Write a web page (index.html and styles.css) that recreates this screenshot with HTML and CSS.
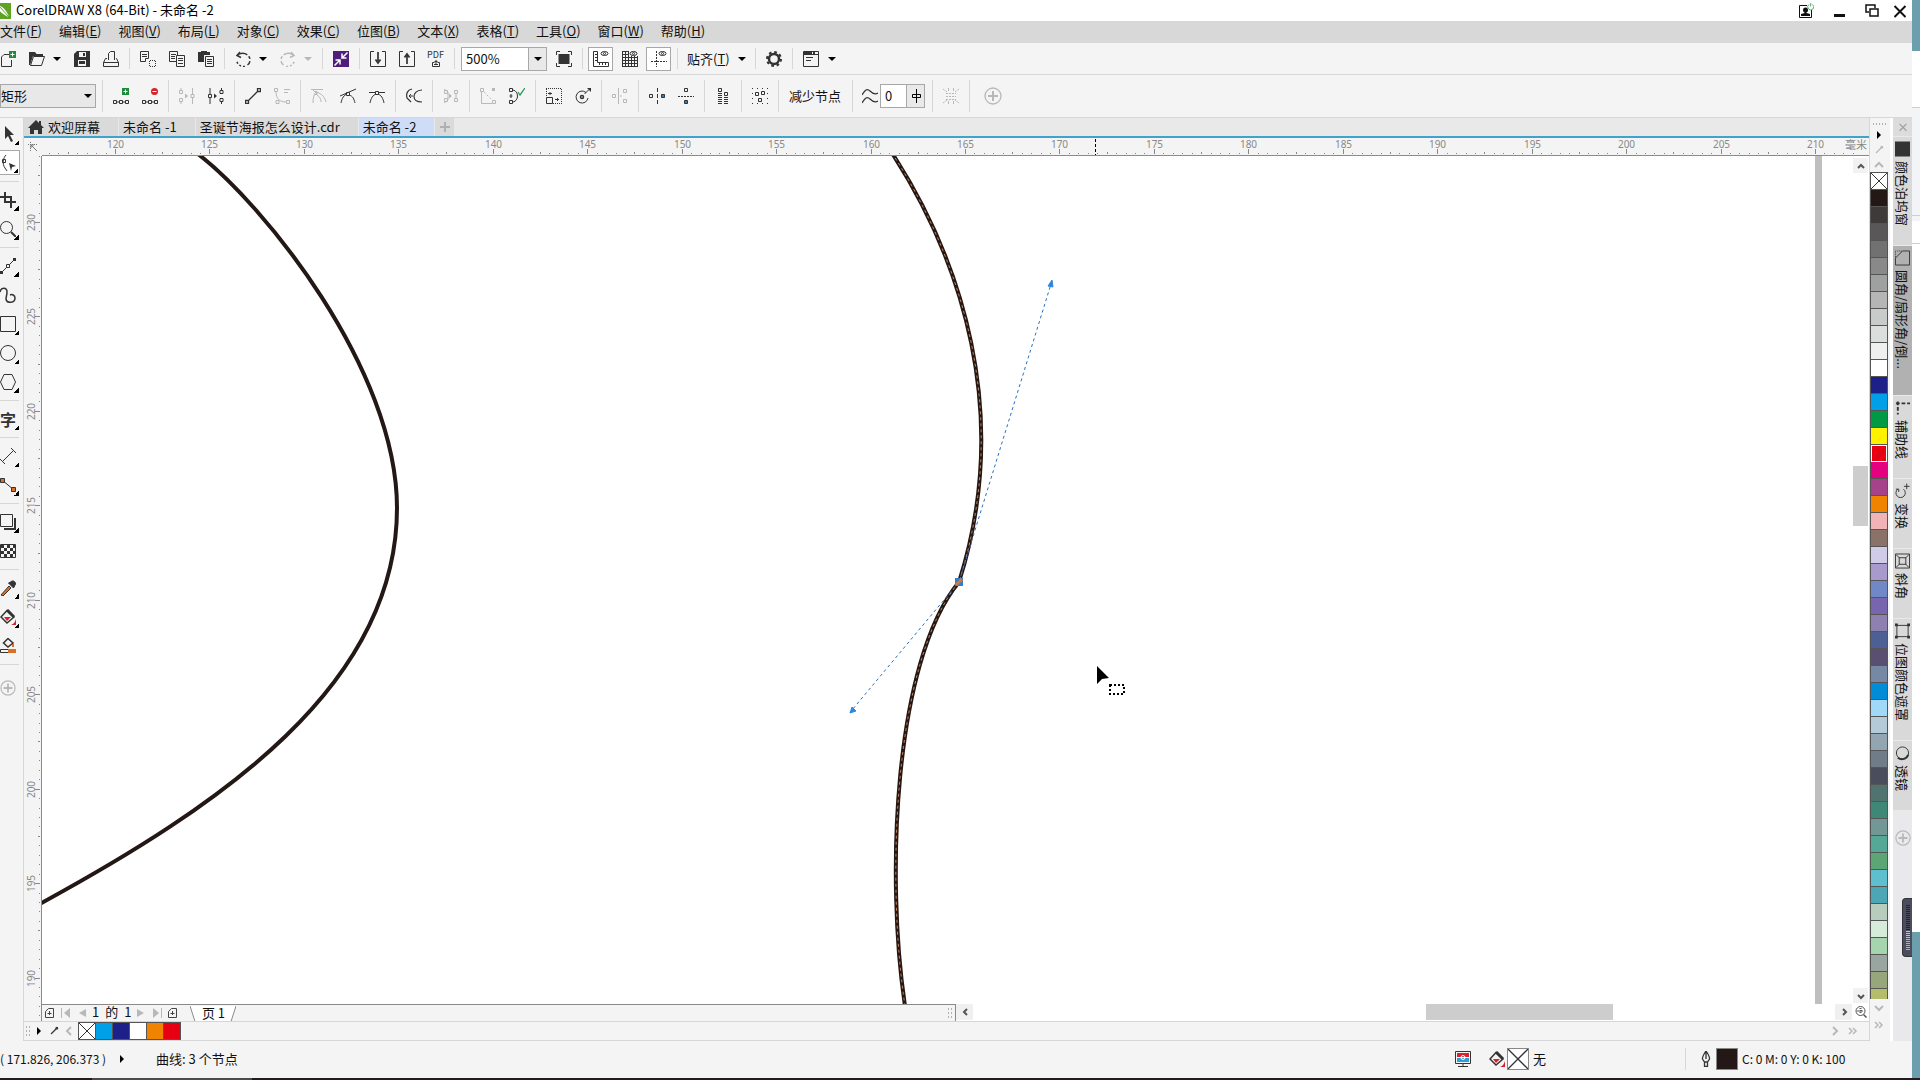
FILE: index.html
```html
<!DOCTYPE html>
<html lang="zh-CN">
<head>
<meta charset="utf-8">
<title>CorelDRAW X8 (64-Bit) - 未命名 -2</title>
<link rel="stylesheet" href="styles.css">
</head>
<body>
<svg class="sprite" aria-hidden="true">
  <symbol id="i-logo" viewBox="0 0 16 16"><path d="M0 0h16v16H0z" fill="#5da423" stroke="none"/><path d="M2 2c6 1 10 6 12 12-6-2-11-6-12-12z" fill="#fff" stroke="none"/><path d="M4 3l10 11" stroke="#5da423"/></symbol>
  <symbol id="i-user" viewBox="0 0 16 16"><path d="M9 2.500H1.500v12h12V7"/><circle cx="7.500" cy="7" r="2.500" fill="currentColor" stroke="none"/><path d="M6.500 8h2v2l3.500 1v2H3v-2l3.500-1z" fill="currentColor" stroke="none"/><path d="M11 1.500a3 3 0 1 0 3.500 0M12.700 0v3.500" stroke="#4caf6a"/></symbol>
  <symbol id="i-min" viewBox="0 0 16 16"><path d="M3 12.500h11" stroke-width="3"/></symbol>
  <symbol id="i-restore" viewBox="0 0 16 16"><path d="M5 9H2V2h9v3M6 6h8v7H6z" stroke-width="1.500"/></symbol>
  <symbol id="i-close" viewBox="0 0 16 16"><path d="M2.500 3l11 11M13.500 3l-11 11" stroke-width="2"/></symbol>
  <symbol id="i-down" viewBox="0 0 8 4"><path d="M0 0h8L4 4z" fill="currentColor" stroke="none"/></symbol>
  <symbol id="i-play" viewBox="0 0 8 8"><path d="M2 0l4 4-4 4z" fill="currentColor" stroke="none"/></symbol>

  <symbol id="i-new" viewBox="0 0 16 16"><path d="M9 3.500H4L1.500 6v9.500h10V9"/><path d="M9 0h7v7H9z" fill="#1d8a3e" stroke="none"/><path d="M12.500 1.500v4M10.500 3.500h4" stroke="#fff"/></symbol>
  <symbol id="i-open" viewBox="0 0 16 16"><path d="M0 1h6l1.500 2H14v2H4L1 14H0z" fill="currentColor" stroke="none"/><path d="M4.500 5.500h11l-3 9h-11z"/></symbol>
  <symbol id="i-save" viewBox="0 0 16 16"><path d="M3 0h13v16H0V3z" fill="currentColor" stroke="none"/><path d="M5 1h7v5H5zM4 9h8v6H4z" fill="#f4f4f4" stroke="none"/><path d="M5 10h6v3H5zM9 2h2v3H9z" fill="currentColor" stroke="none"/></symbol>
  <symbol id="i-print" viewBox="0 0 16 16"><path d="M5.500 9V2.500L7.500.5h4V9M4 7.500H2.500l-2 4v4h15v-4l-2-4H13M.5 11.500h15"/></symbol>
  <symbol id="i-cut" viewBox="0 0 16 16"><path d="M.5.500h8v7h-3v3h-5zM2 3.500h5M2 5.500h5"/><path d="M10 9.500h6M10 15.500h6M9.500 10v6M15.500 10v6" stroke-dasharray="1 1"/></symbol>
  <symbol id="i-copy" viewBox="0 0 16 16"><path d="M7 10.500H.5V.500h8V4M2 3.500h5M2 5.500h4M2 7.500h4M7.500 4.500h8v11h-8zM9 7.500h5M9 9.500h5M9 12.500h5"/></symbol>
  <symbol id="i-paste" viewBox="0 0 16 16"><path d="M0 1h3V0h6v1h3v3H6v7H0z" fill="currentColor" stroke="none"/><path d="M7.500 5.500h8v10h-8zM9 8.500h5M9 10.500h5M9 12.500h5"/></symbol>
  <symbol id="i-undo" viewBox="0 0 16 16"><path d="M2 4.500C7 0 15 3 15 9c0 2-1 4-2.500 5" stroke-width="1.500" stroke-dasharray="11 2 3 2"/><path d="M5 1L2 4.500l4 2" stroke-width="1.500"/><path d="M10 15.500C6 16 2 13.500 1.500 9" stroke-width="1.500" stroke-dasharray="2 2"/></symbol>
  <symbol id="i-redo" viewBox="0 0 16 16"><path d="M14 4.500C9 0 1 3 1 9c0 2 1 4 2.500 5" stroke-width="1.500" stroke-dasharray="11 2 3 2"/><path d="M11 1l3 3.500-4 2" stroke-width="1.500"/><path d="M6 15.500c4 .5 8-2 8.500-6.500" stroke-width="1.500" stroke-dasharray="2 2"/></symbol>
  <symbol id="i-search" viewBox="0 0 16 16"><path d="M0 0h16v16H0z" fill="#4f1d7a" stroke="none"/><path d="M14.500 1.500l-5 5M9 2.500V7h4.500M1.500 14.500l5-5M2.500 9H7v4.500" stroke="#fff" stroke-width="1.500"/></symbol>
  <symbol id="i-import" viewBox="0 0 16 16"><path d="M4 .5H.5v15h15V.5H12"/><path d="M8 1v9M5.500 8.500L8 12l2.500-3.500" stroke-width="1.700"/></symbol>
  <symbol id="i-export" viewBox="0 0 16 16"><path d="M4 .5H.5v15h15V.5H12"/><path d="M8 13V4M5.500 6.500L8 3l2.500 3.500" stroke-width="1.700"/></symbol>
  <symbol id="i-pdfbox" viewBox="0 0 8 8"><path d="M2.500 3.500H.5v4h7v-4h-2M4 1v5M2.500 2.500h3M2 5.500h4"/></symbol>
  <symbol id="i-full" viewBox="0 0 16 16"><path d="M2.500 3h11v10h-11z" fill="currentColor" stroke="none"/><path d="M.5 4V.5H4M12 .5h3.500V4M15.500 12v3.500H12M4 15.500H.5V12"/></symbol>
  <symbol id="i-rulers" viewBox="0 0 16 16"><path d="M.5.500h4v11h11v4H.5zM2 3.500h3M2 6.500h3M2 9.500h3M6.500 14v-2M9.500 14v-2M12.500 14v-2"/><ellipse cx="11.500" cy="2.500" rx="3.500" ry="2"/><circle cx="11.500" cy="2.500" r="1"/></symbol>
  <symbol id="i-grid" viewBox="0 0 16 16"><path d="M.5 0v16M3.500 0v16M6.500 0v16M9.500 5v11M12.500 5v11M15.500 5v11M0 .5h7M0 3.500h7M0 6.500h16M0 9.500h16M0 12.500h16M0 15.500h16"/><ellipse cx="11.500" cy="2.500" rx="3.500" ry="2"/><circle cx="11.500" cy="2.500" r="1"/></symbol>
  <symbol id="i-guides" viewBox="0 0 16 16"><path d="M5.500 0v16M0 10.500h16" stroke-dasharray="2 1"/><ellipse cx="11.500" cy="2.500" rx="3.500" ry="2"/><circle cx="11.500" cy="2.500" r="1"/></symbol>
  <symbol id="i-gear" viewBox="0 0 16 16"><circle cx="8" cy="8" r="5" stroke-width="2.500"/><circle cx="8" cy="8" r="7" stroke-width="2" stroke-dasharray="2.750 2.750"/></symbol>
  <symbol id="i-app" viewBox="0 0 16 16"><path d="M.5.500h15v15H.5zM0 3.500h16M3 6.500h7M3 9.500h5"/><path d="M1 1h8v2H1zM10 1h2v2h-2z" fill="currentColor" stroke="none"/></symbol>

  <symbol id="i-addnode" viewBox="0 0 18 16"><path d="M1.500 12.500h3v3h-3zM7.500 12.500h3v3h-3zM13.500 12.500h3v3h-3zM5 14h2M11 14h2"/><path d="M10 0h7v7h-7z" fill="#1d8a3e" stroke="none"/><path d="M13.500 1.500v4M11.500 3.500h4" stroke="#fff"/></symbol>
  <symbol id="i-delnode" viewBox="0 0 18 16"><path d="M1.500 12.500h3v3h-3zM7.500 12.500h3v3h-3zM13.500 12.500h3v3h-3zM5 14h2M11 14h2"/><circle cx="13.500" cy="3.500" r="3.500" fill="#d8232a" stroke="none"/><path d="M11.500 3.500h4" stroke="#fff"/></symbol>
  <symbol id="i-join" viewBox="0 0 16 16"><path d="M2 0v2M2 13v3M13.500 0v6M13.500 10v6M.5 2.500h3v3h-3zM.5 10.500h3v3h-3zM12 6.500h3v3h-3z"/><path d="M6 5.500L9 8l-3 2.500z" fill="currentColor" stroke="none"/></symbol>
  <symbol id="i-break" viewBox="0 0 16 16"><path d="M2 0v6M2 10v6M13.500 0v2M13.500 13v3M.5 6.500h3v3h-3zM12 2.500h3v3h-3zM12 10.500h3v3h-3z"/><path d="M6 5.500L9 8l-3 2.500z" fill="currentColor" stroke="none"/></symbol>
  <symbol id="i-line" viewBox="0 0 16 16"><path d="M.5 12.500h3v3h-3zM12.500.500h3v3h-3zM3.500 12.500l9-9" stroke-width="1.300"/></symbol>
  <symbol id="i-curve" viewBox="0 0 16 16"><path d="M.5.500h3v3h-3zM12.500 12.500h3v3h-3zM2 4c0 7 4 10 10 10M10 1.500h6M10 4.500h4M2 12.500h3v3H2z"/></symbol>
  <symbol id="i-cusp" viewBox="0 0 16 16"><path d="M0 1.500h12M1 1l5 5M2 15c0-5 1-9 3-11l3 1c4 2 6 5 7 9M3 3.500h3v3H3M6 7c3 2 4 4 4 7"/></symbol>
  <symbol id="i-smooth" viewBox="0 0 16 16"><path d="M0 8l16-7M6.500 4.500h3v3h-3zM1 15c1-5 3-8 6-9M9 7c4 1 5 4 6 8"/></symbol>
  <symbol id="i-sym" viewBox="0 0 16 16"><path d="M0 4.500h6M10 4.500h6M6.500 3.500h3v3h-3zM1 15c1-5 3-8 6-9M9 6c3 1 5 4 6 9"/></symbol>
  <symbol id="i-rev" viewBox="0 0 16 16"><path d="M6 1C1 2 0 6 1 10l4 4M16 2c-6 0-8 4-8 6.500S10 14 16 14" stroke-width="1.200"/><path d="M3 8h4M5 6L3 8l2 2"/></symbol>
  <symbol id="i-sub" viewBox="0 0 16 16"><path d="M1 1l4 3v8l-4 3M1.500 2.500h3v3h-3zM1.500 10.500h3v3h-3zM11.500 2.500h3v3h-3zM11.500 10.500h3v3h-3zM13 6v4"/><path d="M6 5.500L9 8l-3 2.500z" fill="currentColor" stroke="none"/></symbol>
  <symbol id="i-extend" viewBox="0 0 16 16"><path d="M.5.500h3v3h-3zM12.500 12.500h3v3h-3zM1.500 4v11.500H12"/><path d="M4 4l8 8" stroke-dasharray="2 2"/><path d="M12 0h3v3h-3z" fill="currentColor" stroke="none"/></symbol>
  <symbol id="i-closecurve" viewBox="0 0 16 16"><path d="M.5.500h3v3h-3zM.5 12.500h3v3h-3zM4 2c6 1 6 11 0 12M2 6v4M.5 8h3"/><path d="M9 4l2 3 5-7" stroke="#2d9a56" stroke-width="1.300"/></symbol>
  <symbol id="i-stretch" viewBox="0 0 16 16"><path d="M0 .5h16M15.500 1v15M.5 1v8M7 15.500h9" stroke-dasharray="1 1"/><path d="M.5 9.500h6v6h-6zM9 11.500h4M11.500 10v3M2 5.500h4M4 4v3"/></symbol>
  <symbol id="i-rotate" viewBox="0 0 16 16"><path d="M11 4.500A6 6 0 1 0 13 10M9.500 6L14 1.500"/><path d="M12 0h4v4z" fill="currentColor" stroke="none"/><circle cx="7" cy="9" r="1.500" stroke-width="1.500"/></symbol>
  <symbol id="i-align" viewBox="0 0 16 16"><path d="M6.500 0v16M.5 6.500h3v3h-3zM11.500 1.500h3v3h-3zM11.500 11.500h3v3h-3zM10 8H8"/></symbol>
  <symbol id="i-hrefl" viewBox="0 0 16 16"><path d="M8.500 0v4M8.500 6v4M8.500 12v4M.5 6.500h3v3h-3z"/><path d="M12.500 6.500h3v3h-3z" fill="#2f7fc1"/></symbol>
  <symbol id="i-vrefl" viewBox="0 0 16 16"><path d="M0 8.500h16" stroke-dasharray="2 1"/><path d="M6.500.500h3v3h-3z"/><path d="M6.500 12.500h3v3h-3z" fill="#2f7fc1"/></symbol>
  <symbol id="i-elastic" viewBox="0 0 16 16"><path d="M3.500.500h3v3h-3zM9.500 4.500h3v3h-3z"/><path d="M3 5.500h4M3 7.500h4M3 9.500h4M3 11.500h4M3 13.500h4M3 15.500h4M9 9.500h4M9 11.500h4M9 13.500h4M9 15.500h4"/></symbol>
  <symbol id="i-selall" viewBox="0 0 16 16"><path d="M3.500 4.500h3v3h-3zM9.500 3.500h3v3h-3zM6.500 10.500h3v3h-3z"/><path d="M0 .5h16M0 15.500h16" stroke-dasharray="1 4"/><path d="M.5 5v6M15.500 5v6" stroke-dasharray="1 4"/></symbol>
  <symbol id="i-wave" viewBox="0 0 16 16"><path d="M0 7c3-5 5-7 8-4s5 4 8 2M0 15c3-5 5-7 8-4s5 4 8 2" stroke-width="1.200"/></symbol>
  <symbol id="i-slider" viewBox="0 0 12 14"><path d="M6.500 0v14M2.500 5.500h8v3h-8z"/></symbol>
  <symbol id="i-box" viewBox="0 0 16 16"><path d="M0 1l4 3M16 1l-4 3M0 15l4-3M16 15l-4-3M3 5.500h10M3 8.500h10M3 11.500h10" stroke-dasharray="2 1"/><path d="M5.500 0v3M10.500 0v3M5.500 13v3M10.500 13v3"/></symbol>
  <symbol id="i-plus" viewBox="0 0 18 18"><circle cx="9" cy="9" r="8" stroke-width="1.300"/><path d="M9 4v10M4 9h10" stroke-width="2"/></symbol>
  <symbol id="i-add" viewBox="0 0 16 16"><path d="M8 3v10M3 8h10" stroke-width="2"/></symbol>

  <symbol id="i-pick" viewBox="0 0 16 16"><path d="M5 0v13l3-3 3 6 2-1-3-6h4z" fill="currentColor" stroke="none"/></symbol>
  <symbol id="i-shape" viewBox="0 0 16 16"><path d="M6 0c-3 3-4 9-1 13l2 3M2.500 4.500h3v3h-3z"/><path d="M9 8l7 3-4 1-1 4z" fill="currentColor" stroke="none"/></symbol>
  <symbol id="i-crop" viewBox="0 0 16 16"><path d="M5 0v10h11M0 5h11v11" stroke-width="2"/></symbol>
  <symbol id="i-zoom" viewBox="0 0 16 16"><circle cx="6.500" cy="6.500" r="6"/><path d="M11 11l5 5" stroke-width="2"/></symbol>
  <symbol id="i-free" viewBox="0 0 16 16"><path d="M0 16L15 1"/><path d="M6.500 6.500h3v3h-3z" fill="#f4f4f4"/><path d="M0 13h3v3H0zM13 0h3v3h-3z" fill="currentColor" stroke="none"/></symbol>
  <symbol id="i-art" viewBox="0 0 16 16"><path d="M0 5c1-5 7-5 7 0 0 3-1 5-1 7 1 5 9 4 9-1 0-3-3-4-5-3" stroke-width="1.500"/></symbol>
  <symbol id="i-rect" viewBox="0 0 16 16"><path d="M.5.500h15v15H.5z"/></symbol>
  <symbol id="i-ell" viewBox="0 0 16 16"><circle cx="8" cy="8" r="7.500"/></symbol>
  <symbol id="i-poly" viewBox="0 0 16 16"><path d="M4 .5h8L15.500 8 12 15.500H4L.5 8z"/></symbol>
  <symbol id="i-dim" viewBox="0 0 16 16"><path d="M2 14L14 2M0 11l5 5M11 0l5 5"/></symbol>
  <symbol id="i-conn" viewBox="0 0 16 16"><path d="M2 3l12 10"/><path d="M.5 1.500h4v4h-4zM11.500 10.500h4v4h-4z" fill="#d8702a"/></symbol>
  <symbol id="i-shadow" viewBox="0 0 16 16"><path d="M.5.500h12v12H.5z"/><path d="M15 4v11H4" stroke-width="2"/></symbol>
  <symbol id="i-trans" viewBox="0 0 16 16"><path d="M.5 1.500h15v13H.5z"/><path d="M1 3.500h14M1 9.500h14" stroke-width="3" stroke-dasharray="3 3"/><path d="M4 6.500h11M4 12.500h11" stroke-width="3" stroke-dasharray="3 3"/></symbol>
  <symbol id="i-drop" viewBox="0 0 16 16"><path d="M1 15L9 6l2 2-8 8z" fill="#d8702a"/><path d="M8.500 3l5 5 2-4c0-3-3-4-5-2z" fill="currentColor"/></symbol>
  <symbol id="i-fill" viewBox="0 0 16 16"><path d="M7 1.500L1 8l6 6 7-6z" stroke-width="1.500"/><path d="M4 8h7l-4 4z" fill="#d8232a" stroke="none"/><path d="M7 1l7 7" stroke-width="3"/><path d="M16 10v6h-5c3-1 4-3 5-6z" fill="#d8232a" stroke="none"/></symbol>
  <symbol id="i-smart" viewBox="0 0 16 16"><path d="M8 .5L3.500 5 8 9l5-4z" stroke-width="1.500"/><path d="M.5 11.500h15v3H.5z"/><path d="M8 11h8v4H8zM12 6h2v3h-2z" fill="#d8702a" stroke="none"/></symbol>

  <symbol id="i-home" viewBox="0 0 16 16"><path d="M8 1L0 9h2v6h4v-4h4v4h4V9h2l-3-3V2h-2v2z" fill="currentColor" stroke="none"/></symbol>
  <symbol id="i-origin" viewBox="0 0 12 12"><path d="M1 3.500h10M3.500 1v10" stroke-dasharray="1 1"/><path d="M4 4l6 6M4 7V4h3"/></symbol>
  <symbol id="i-up" viewBox="0 0 12 12"><path d="M3 8l3-3 3 3" stroke-width="2"/></symbol>
  <symbol id="i-dn" viewBox="0 0 12 12"><path d="M3 5l3 3 3-3" stroke-width="2"/></symbol>
  <symbol id="i-up2" viewBox="0 0 12 12"><path d="M2 8l4-4 4 4" stroke-width="2"/></symbol>
  <symbol id="i-dn2" viewBox="0 0 12 12"><path d="M2 4l4 4 4-4" stroke-width="2"/></symbol>
  <symbol id="i-lt" viewBox="0 0 12 12"><path d="M8 3L5 6l3 3" stroke-width="2"/></symbol>
  <symbol id="i-rt" viewBox="0 0 12 12"><path d="M5 3l3 3-3 3" stroke-width="2"/></symbol>
  <symbol id="i-lt2" viewBox="0 0 12 12"><path d="M8 2L4 6l4 4" stroke-width="2"/></symbol>
  <symbol id="i-rt3" viewBox="0 0 12 12"><path d="M4 2l4 4-4 4" stroke-width="2"/></symbol>
  <symbol id="i-rt2" viewBox="0 0 12 12"><path d="M2 3l3 3-3 3M6 3l3 3-3 3" stroke-width="1.500"/></symbol>
  <symbol id="i-zoomall" viewBox="0 0 12 12"><circle cx="5.500" cy="5" r="4.500"/><path d="M8.500 8.500l3 3" stroke-width="1.500"/><path d="M5.500 2v6M2.500 5h6" stroke-dasharray="1 1" stroke-width="2"/></symbol>
  <symbol id="i-pen" viewBox="0 0 12 12"><path d="M3 9l5-5" stroke-width="1.300"/><path d="M7.500 3l1.500 1.500L10 3 9 2z" fill="currentColor"/></symbol>
  <symbol id="i-page" viewBox="0 0 10 10"><path d="M3.500.500h5v9h-8v-6zM4.500 3v4M2.500 5.500h4"/></symbol>
  <symbol id="i-first" viewBox="0 0 10 10"><path d="M.5 0v10" /><path d="M9 0v10L3 5z" fill="currentColor" stroke="none"/></symbol>
  <symbol id="i-prev" viewBox="0 0 10 10"><path d="M9 1v8L2 5z" fill="currentColor" stroke="none"/></symbol>
  <symbol id="i-next" viewBox="0 0 10 10"><path d="M1 1v8l7-4z" fill="currentColor" stroke="none"/></symbol>
  <symbol id="i-last" viewBox="0 0 10 10"><path d="M9.500 0v10" /><path d="M1 0v10l6-5z" fill="currentColor" stroke="none"/></symbol>
  <symbol id="i-pagetab" viewBox="0 0 46 16" preserveAspectRatio="none"><path d="M0 0l5 15.500h36L46 0" fill="#fff" stroke="#8a8a8a"/></symbol>

  <symbol id="i-d1" viewBox="0 0 16 16"><path d="M0 0h16v16H0z" fill="#333" stroke="none"/></symbol>
  <symbol id="i-d2" viewBox="0 0 16 16"><path d="M8 .5h7.500v15H.5V8z"/><path d="M.5 7V.5H8" stroke-dasharray="1 1"/></symbol>
  <symbol id="i-d3" viewBox="0 0 16 16"><path d="M1 3h15M3 1v14" stroke-width="2" stroke-dasharray="4 2"/></symbol>
  <symbol id="i-d4" viewBox="0 0 16 16"><path d="M3 6a5 5 0 1 0 6 0M1 6h3v3M12.500 0v6M9.500 3h6"/></symbol>
  <symbol id="i-d5" viewBox="0 0 16 16"><path d="M.5.500h15v15H.5zM4.500 4.500h7v7h-7zM1 1l4 4M15 1l-4 4M1 15l4-4M15 15l-4-4"/></symbol>
  <symbol id="i-d6" viewBox="0 0 16 16"><path d="M2 2h12v12H2z"/><path d="M0 0h3v3H0zM13 0h3v3h-3zM0 13h3v3H0zM13 13h3v3h-3z" fill="currentColor" stroke="none"/></symbol>
  <symbol id="i-d7" viewBox="0 0 16 16"><circle cx="8" cy="8" r="6.500"/><path d="M3 13a7 7 0 0 0 11-3" stroke-width="2"/></symbol>
  <symbol id="i-monitor" viewBox="0 0 16 16"><path d="M.5.500h15v12H.5zM3 15.500h10M8 13v2"/><path d="M2 2h12v4H2z" fill="#d8232a" stroke="none"/><path d="M2 7h12v4H2z" fill="#2a9fd8" stroke="none"/><circle cx="8" cy="6.500" r="2" stroke="#fff"/></symbol>
  <symbol id="i-nib" viewBox="0 0 16 16"><path d="M8 0C6 3 4 6 4.500 8l2 3h3l2-3C12 6 10 3 8 0zM8 2v6M6.500 11.500v4h3v-4" stroke-width="1.300"/></symbol>
  <symbol id="i-none" viewBox="0 0 16 16" preserveAspectRatio="none"><path d="M0 0l16 16M16 0L0 16"/></symbol>
</svg>

<div class="screen">
<div class="app">
  <header class="titlebar">
    <svg class="ic logo"><use href="#i-logo"/></svg>
    <h1>CorelDRAW X8 (64-Bit) - 未命名 -2</h1>
    <button aria-label="登录"><svg class="ic"><use href="#i-user"/></svg></button>
    <button aria-label="最小化"><svg class="ic"><use href="#i-min"/></svg></button>
    <button aria-label="还原"><svg class="ic"><use href="#i-restore"/></svg></button>
    <button class="close" aria-label="关闭"><svg class="ic"><use href="#i-close"/></svg></button>
  </header>

  <nav class="menubar">
    <button>文件(<u>F</u>)</button><button>编辑(<u>E</u>)</button><button>视图(<u>V</u>)</button><button>布局(<u>L</u>)</button><button>对象(<u>C</u>)</button><button>效果(<u>C</u>)</button><button>位图(<u>B</u>)</button><button>文本(<u>X</u>)</button><button>表格(<u>T</u>)</button><button>工具(<u>O</u>)</button><button>窗口(<u>W</u>)</button><button>帮助(<u>H</u>)</button>
  </nav>

  <div class="bar standard">
    <button class="tb" aria-label="新建"><svg class="ic"><use href="#i-new"/></svg></button>
    <button class="tb" aria-label="打开"><svg class="ic"><use href="#i-open"/></svg></button>
    <button class="dd" aria-label="最近打开"><svg class="arrow"><use href="#i-down"/></svg></button>
    <button class="tb" aria-label="保存"><svg class="ic"><use href="#i-save"/></svg></button>
    <button class="tb" aria-label="打印"><svg class="ic"><use href="#i-print"/></svg></button>
    <i class="sep"></i>
    <button class="tb" aria-label="剪切"><svg class="ic"><use href="#i-cut"/></svg></button>
    <button class="tb" aria-label="复制"><svg class="ic"><use href="#i-copy"/></svg></button>
    <button class="tb" aria-label="粘贴"><svg class="ic"><use href="#i-paste"/></svg></button>
    <i class="sep"></i>
    <button class="tb" aria-label="撤消"><svg class="ic"><use href="#i-undo"/></svg></button>
    <button class="dd" aria-label="撤消列表"><svg class="arrow"><use href="#i-down"/></svg></button>
    <button class="tb off" aria-label="重做"><svg class="ic"><use href="#i-redo"/></svg></button>
    <button class="dd off" aria-label="重做列表"><svg class="arrow"><use href="#i-down"/></svg></button>
    <i class="sep"></i>
    <button class="tb" aria-label="搜索内容"><svg class="ic"><use href="#i-search"/></svg></button>
    <i class="sep"></i>
    <button class="tb" aria-label="导入"><svg class="ic"><use href="#i-import"/></svg></button>
    <button class="tb" aria-label="导出"><svg class="ic"><use href="#i-export"/></svg></button>
    <button class="tb pdf"><span>PDF</span><svg><use href="#i-pdfbox"/></svg></button>
    <i class="sep"></i>
    <div class="combo zoomlevel"><input aria-label="缩放级别" value="500%"><button aria-label="缩放列表"><svg class="arrow"><use href="#i-down"/></svg></button></div>
    <button class="tb" aria-label="全屏预览"><svg class="ic"><use href="#i-full"/></svg></button>
    <i class="sep"></i>
    <button class="tb on" aria-label="显示标尺"><svg class="ic"><use href="#i-rulers"/></svg></button>
    <button class="tb" aria-label="显示网格"><svg class="ic"><use href="#i-grid"/></svg></button>
    <button class="tb on" aria-label="显示辅助线"><svg class="ic"><use href="#i-guides"/></svg></button>
    <i class="sep"></i>
    <button class="word">贴齐(<u>T</u>)</button>
    <button class="dd" aria-label="贴齐列表"><svg class="arrow"><use href="#i-down"/></svg></button>
    <i class="sep"></i>
    <button class="tb" aria-label="选项"><svg class="ic"><use href="#i-gear"/></svg></button>
    <i class="sep"></i>
    <button class="tb" aria-label="应用程序启动器"><svg class="ic"><use href="#i-app"/></svg></button>
    <button class="dd" aria-label="启动器列表"><svg class="arrow"><use href="#i-down"/></svg></button>
  </div>

  <div class="bar property">
    <div class="combo mode"><select aria-label="选取模式"><option>矩形</option><option>手绘</option></select><svg class="arrow"><use href="#i-down"/></svg></div>
    <i class="sep"></i>
    <button class="tb" aria-label="添加节点"><svg class="ic wide"><use href="#i-addnode"/></svg></button>
    <button class="tb" aria-label="删除节点"><svg class="ic wide"><use href="#i-delnode"/></svg></button>
    <i class="sep"></i>
    <button class="tb off" aria-label="连接两个节点"><svg class="ic"><use href="#i-join"/></svg></button>
    <button class="tb" aria-label="断开曲线"><svg class="ic"><use href="#i-break"/></svg></button>
    <i class="sep"></i>
    <button class="tb" aria-label="转换为线条"><svg class="ic"><use href="#i-line"/></svg></button>
    <button class="tb off" aria-label="转换为曲线"><svg class="ic"><use href="#i-curve"/></svg></button>
    <i class="sep"></i>
    <button class="tb off" aria-label="尖突节点"><svg class="ic"><use href="#i-cusp"/></svg></button>
    <button class="tb" aria-label="平滑节点"><svg class="ic"><use href="#i-smooth"/></svg></button>
    <button class="tb" aria-label="对称节点"><svg class="ic"><use href="#i-sym"/></svg></button>
    <i class="sep"></i>
    <button class="tb" aria-label="反转方向"><svg class="ic"><use href="#i-rev"/></svg></button>
    <i class="sep"></i>
    <button class="tb off" aria-label="提取子路径"><svg class="ic"><use href="#i-sub"/></svg></button>
    <i class="sep"></i>
    <button class="tb off" aria-label="延长曲线使之闭合"><svg class="ic"><use href="#i-extend"/></svg></button>
    <button class="tb" aria-label="闭合曲线"><svg class="ic"><use href="#i-closecurve"/></svg></button>
    <i class="sep"></i>
    <button class="tb" aria-label="延展与缩放节点"><svg class="ic"><use href="#i-stretch"/></svg></button>
    <button class="tb" aria-label="旋转与倾斜节点"><svg class="ic"><use href="#i-rotate"/></svg></button>
    <i class="sep"></i>
    <button class="tb off" aria-label="对齐节点"><svg class="ic"><use href="#i-align"/></svg></button>
    <i class="sep"></i>
    <button class="tb" aria-label="水平反射节点"><svg class="ic"><use href="#i-hrefl"/></svg></button>
    <button class="tb" aria-label="垂直反射节点"><svg class="ic"><use href="#i-vrefl"/></svg></button>
    <i class="sep"></i>
    <button class="tb" aria-label="弹性模式"><svg class="ic"><use href="#i-elastic"/></svg></button>
    <i class="sep"></i>
    <button class="tb" aria-label="选择所有节点"><svg class="ic"><use href="#i-selall"/></svg></button>
    <i class="sep"></i>
    <button class="word reduce">减少节点</button>
    <i class="sep"></i>
    <label class="smoothing"><svg class="ic"><use href="#i-wave"/></svg><span class="combo"><input aria-label="曲线平滑度" value="0"><button aria-label="调整平滑度"><svg class="slide"><use href="#i-slider"/></svg></button></span></label>
    <i class="sep"></i>
    <button class="tb off" aria-label="边框"><svg class="ic"><use href="#i-box"/></svg></button>
    <i class="sep"></i>
    <button class="tb off more" aria-label="快速自定义"><svg class="ic big"><use href="#i-plus"/></svg></button>
  </div>

  <main class="work">
    <aside class="toolbox">
      <button class="fly" aria-label="选择"><svg class="ic"><use href="#i-pick"/></svg></button>
      <button class="fly on" aria-label="形状"><svg class="ic"><use href="#i-shape"/></svg></button>
      <i></i>
      <button class="fly" aria-label="裁剪"><svg class="ic"><use href="#i-crop"/></svg></button>
      <button class="fly" aria-label="缩放"><svg class="ic"><use href="#i-zoom"/></svg></button>
      <i></i>
      <button class="fly" aria-label="手绘"><svg class="ic"><use href="#i-free"/></svg></button>
      <button aria-label="艺术笔"><svg class="ic"><use href="#i-art"/></svg></button>
      <button class="fly" aria-label="矩形"><svg class="ic"><use href="#i-rect"/></svg></button>
      <button class="fly" aria-label="椭圆形"><svg class="ic"><use href="#i-ell"/></svg></button>
      <button class="fly" aria-label="多边形"><svg class="ic"><use href="#i-poly"/></svg></button>
      <i></i>
      <button class="fly glyph">字</button>
      <i></i>
      <button class="fly" aria-label="平行度量"><svg class="ic"><use href="#i-dim"/></svg></button>
      <button class="fly" aria-label="直线连接器"><svg class="ic"><use href="#i-conn"/></svg></button>
      <i></i>
      <button class="fly" aria-label="阴影"><svg class="ic"><use href="#i-shadow"/></svg></button>
      <button aria-label="透明度"><svg class="ic"><use href="#i-trans"/></svg></button>
      <i></i>
      <button class="fly" aria-label="颜色滴管"><svg class="ic"><use href="#i-drop"/></svg></button>
      <button class="fly" aria-label="交互式填充"><svg class="ic"><use href="#i-fill"/></svg></button>
      <button aria-label="智能填充"><svg class="ic"><use href="#i-smart"/></svg></button>
      <i></i>
      <button class="off more" aria-label="快速自定义"><svg class="ic"><use href="#i-plus"/></svg></button>
    </aside>

    <section class="document">
      <div class="tabs">
        <button><svg class="ic"><use href="#i-home"/></svg>欢迎屏幕</button>
        <button>未命名 -1</button>
        <button>圣诞节海报怎么设计.cdr</button>
        <button class="current">未命名 -2</button>
        <button class="add" aria-label="新建文档"><svg class="ic"><use href="#i-add"/></svg></button>
      </div>

      <div class="view">
        <div class="corner"><svg><use href="#i-origin"/></svg></div>
        <div class="hruler"><svg id="hruler"></svg><span>毫米</span></div>
        <div class="vruler"><svg id="vruler"></svg></div>
        <svg class="canvas">
          <g transform="translate(-42 -156)">
            <path class="page-edge" d="M1818.500 150V1010"/>
            <path class="outline" d="M198 154C262 203 397 368 397 508C397 686 220 806 36 906"/>
            <path class="outline" d="M892 153C960 258 1013 412 959 582C893 662 886 880 905 1006"/>
            <path class="trace" d="M892 153C960 258 1013 412 959 582C893 662 886 880 905 1006"/>
            <path class="handle" d="M959 582L1051 284M959 582L852 710"/>
            <path class="tip" d="M1048 286l4-6 1 7zM850 713l2-6 4 4z"/>
            <path class="node" d="M955 578h8v8h-8z"/><path class="node-mark" d="M956 585l6-6"/>
            <path class="cursor" d="M1097 666v18l5-5 7-1z"/>
            <path class="marquee" d="M1110 685h14v9h-14z"/>
          </g>
        </svg>
        <div class="vscroll">
          <button aria-label="向上"><svg><use href="#i-up"/></svg></button>
          <div class="track"><div class="thumb"></div></div>
          <button aria-label="向下"><svg><use href="#i-dn"/></svg></button>
        </div>
        <div class="bottom">
          <div class="pages">
            <button aria-label="在前面添加页"><svg><use href="#i-page"/></svg></button>
            <button class="off" aria-label="首页"><svg><use href="#i-first"/></svg></button>
            <button class="off" aria-label="上一页"><svg><use href="#i-prev"/></svg></button>
            <span class="count"><b>1</b><b>的</b><b>1</b></span>
            <button class="off" aria-label="下一页"><svg><use href="#i-next"/></svg></button>
            <button class="off" aria-label="末页"><svg><use href="#i-last"/></svg></button>
            <button aria-label="在后面添加页"><svg><use href="#i-page"/></svg></button>
            <button class="pagetab"><svg><use href="#i-pagetab"/></svg><span>页 1</span></button>
            <i class="grip"></i>
          </div>
          <div class="hscroll">
            <button aria-label="向左"><svg><use href="#i-lt"/></svg></button>
            <div class="track"><div class="thumb"></div></div>
            <button aria-label="向右"><svg><use href="#i-rt"/></svg></button>
            <button class="nav" aria-label="导航器"><svg><use href="#i-zoomall"/></svg></button>
          </div>
        </div>
      </div>

      <div class="docpalette">
        <i class="grip"></i>
        <button aria-label="菜单"><svg class="play"><use href="#i-play"/></svg></button>
        <button aria-label="滴管"><svg><use href="#i-pen"/></svg></button>
        <button class="off" aria-label="向左滚动"><svg><use href="#i-lt2"/></svg></button>
        <div class="swatches" id="docSwatches"></div>
        <button class="off end" aria-label="向右滚动"><svg><use href="#i-rt3"/></svg></button>
        <button class="off" aria-label="展开"><svg><use href="#i-rt2"/></svg></button>
      </div>
    </section>

    <aside class="palette">
      <i class="grip"></i>
      <button aria-label="菜单"><svg class="play"><use href="#i-play"/></svg></button>
      <button class="off" aria-label="滴管"><svg><use href="#i-pen"/></svg></button>
      <button class="off" aria-label="向上滚动"><svg><use href="#i-up2"/></svg></button>
      <div class="swatches" id="mainSwatches"></div>
      <button class="off" aria-label="向下滚动"><svg><use href="#i-dn2"/></svg></button>
      <button class="off" aria-label="展开"><svg><use href="#i-rt2"/></svg></button>
    </aside>

    <aside class="dockers">
      <button class="shut" aria-label="关闭"><svg><use href="#i-close"/></svg></button>
      <button class="tab"><svg class="ic"><use href="#i-d1"/></svg>颜色泊坞窗</button>
      <button class="tab current"><svg class="ic"><use href="#i-d2"/></svg>圆角/扇形角/倒...</button>
      <button class="tab"><svg class="ic"><use href="#i-d3"/></svg>辅助线</button>
      <button class="tab"><svg class="ic"><use href="#i-d4"/></svg>变换</button>
      <button class="tab"><svg class="ic"><use href="#i-d5"/></svg>斜角</button>
      <button class="tab"><svg class="ic"><use href="#i-d6"/></svg>位图颜色遮罩</button>
      <button class="tab"><svg class="ic"><use href="#i-d7"/></svg>透镜</button>
      <button class="more off" aria-label="添加泊坞窗"><svg class="ic"><use href="#i-plus"/></svg></button>
      <div class="meter"><i></i></div>
    </aside>
  </main>

  <footer class="status">
    <span class="coords">( 171.826, 206.373 )</span>
    <button aria-label="更多"><svg class="play"><use href="#i-play"/></svg></button>
    <span class="object">曲线: 3 个节点</span>
    <svg class="ic proof"><use href="#i-monitor"/></svg>
    <span class="paint fill"><svg class="ic"><use href="#i-fill"/></svg><svg class="chip"><use href="#i-none"/></svg>无</span>
    <span class="paint pen"><svg class="ic"><use href="#i-nib"/></svg><i class="chip solid"></i><span class="ink">C: 0 M: 0 Y: 0 K: 100</span></span>
  </footer>
</div>
<div class="desktop"><i class="sky"></i><i class="head"></i><i class="band"></i><i class="line"></i><i class="body"></i><i class="sea"></i></div>
</div>
<div class="taskbar"><i></i></div>
<script src="script.js"></script>
</body>
</html>
```
FILE: styles.css
```css
* { box-sizing: border-box; }
html, body { height: 100%; margin: 0; }
body {
  display: flex;
  flex-direction: column;
  overflow: hidden;
  background: #fff;
  color: #111;
  font: 13px/16px "Noto Sans CJK SC", "Noto Sans", sans-serif;
}
button, input, select { font: inherit; color: inherit; }
button {
  display: flex;
  flex: none;
  align-items: center;
  justify-content: center;
  padding: 0;
  border: 0;
  background: none;
}
svg { display: block; flex: none; fill: none; stroke: currentColor; }
.sprite { position: absolute; width: 0; height: 0; }
.ic { width: 16px; height: 16px; }
.ic.wide, .ic.big { width: 18px; }
.ic.big { height: 18px; }
.arrow { width: 8px; height: 4px; color: #000; }
.play { width: 8px; height: 8px; color: #000; }
.off, .off .arrow { color: #b8b8b8; }

.screen { display: flex; flex: 1; min-height: 0; }
.app { display: flex; flex: 1; flex-direction: column; min-width: 0; background: #f4f4f4; }

/* Title and menus */
.titlebar { display: flex; align-items: center; height: 21px; background: #fff; color: #000; }
.logo { margin-left: -5px; }
.titlebar h1 { flex: 1; margin: 0 0 0 5px; padding-bottom: 2px; font-size: 13px; font-weight: 400; }
.titlebar button { width: 33px; height: 21px; color: #111; }
.titlebar .close { width: 24px; }
.menubar { display: flex; gap: 17px; height: 22px; padding-bottom: 2px; background: #d8d8d8; }

/* Toolbars */
.bar { display: flex; align-items: center; border-bottom: 1px solid #d6d6d6; color: #333; }
.standard { height: 32px; }
.standard > .tb:first-child { margin-left: -7px; }
.property { height: 43px; }
.tb { width: 29px; height: 24px; }
.tb.on { width: 25px; margin: 0 2px; border: 1px solid #a8a8a8; background: #fff; }
.dd { justify-content: flex-start; width: 16px; height: 24px; padding-left: 2px; }
.sep { flex: none; align-self: stretch; width: 8px; margin: 5px 0; background: linear-gradient(#d6d6d6, #d6d6d6) center / 1px 100% no-repeat; }
.pdf { flex-direction: column; font-size: 9px; line-height: 9px; }
.pdf svg { width: 8px; height: 8px; }
.word { padding: 0 6px; color: #111; }
.reduce { padding: 0 7px; }
.combo { display: flex; height: 24px; border: 1px solid #a8a8a8; background: #fff; color: #111; }
.combo input { flex: 1; width: 0; min-width: 0; padding: 0 4px; border: 0; background: none; outline: 0; }
.combo button { width: 18px; border-left: 1px solid #a8a8a8; background: #e9e9e9; }
.zoomlevel { width: 86px; margin: 0 2px 0 3px; }
.mode { display: grid; align-items: center; width: 96px; margin-right: 2px; background: #e8e8e8; }
.mode select { grid-area: 1 / 1; width: 100%; height: 22px; padding: 0; border: 0; background: none; appearance: none; }
.mode .arrow { grid-area: 1 / 1; justify-self: end; margin-right: 3px; pointer-events: none; }
.smoothing { display: flex; align-items: center; gap: 2px; padding: 0 3px 0 6px; }
.smoothing .combo { width: 45px; }
.slide { width: 12px; height: 14px; color: #000; }
.more { width: 40px; }

/* Work area */
.work { display: flex; flex: 1; min-height: 0; }
.toolbox { display: flex; flex: none; flex-direction: column; width: 24px; padding-top: 1px; border-right: 1px solid #d6d6d6; color: #333; }
.toolbox button { justify-content: flex-start; width: 20px; height: 25px; margin: 2px 0; }
.toolbox .on { border: 1px solid #a8a8a8; border-left: 0; background: #fff; }
.toolbox > i { flex: none; width: 19px; height: 8px; background: linear-gradient(#d6d6d6, #d6d6d6) center / 100% 1px no-repeat; }
.toolbox .fly { background: linear-gradient(135deg, transparent 50%, #000 50%) right 1px bottom 1px / 5px 5px no-repeat; }
.toolbox .fly.on { background-color: #fff; }
.toolbox .glyph { font-size: 16px; font-weight: 700; }
.toolbox .more { height: 36px; }
.document { display: flex; flex: 1; flex-direction: column; min-width: 0; }

.tabs { display: flex; flex: none; height: 20px; border-bottom: 2px solid #3fa3cc; background: #e9e9e9; }
.tabs button { padding: 0 18px 0 4px; border-right: 1px solid #e9e9e9; background: #dadada; }
.tabs .ic { margin-right: 4px; color: #333; }
.tabs .current { background: #cfdcf8; }
.tabs .add { width: 20px; padding: 0; }
.tabs .add .ic { margin: 0; color: #b0b0b0; }

.view { display: grid; flex: 1; grid-template: 18px minmax(0, 1fr) 17px / 18px minmax(0, 1fr) 16px; min-height: 0; }
.corner { display: flex; align-items: center; justify-content: center; color: #777; }
.corner svg { width: 12px; height: 12px; }
.hruler { display: grid; grid-column: 2 / 4; border-bottom: 1px solid #8a8a8a; color: #888; font-size: 11px; line-height: 12px; }
.hruler svg { grid-area: 1 / 1; width: 100%; height: 17px; }
.hruler span { grid-area: 1 / 1; justify-self: end; padding-right: 2px; }
.vruler { grid-row: 2 / 4; overflow: hidden; border-right: 1px solid #8a8a8a; color: #888; }
.vruler svg { width: 17px; height: 100%; }
.hruler svg, .vruler svg { overflow: visible; }
.view text { fill: #888; stroke: none; font-family: "Noto Sans", sans-serif; font-size: 10px; text-anchor: middle; }
.pointer { stroke: #000; stroke-dasharray: 3 2; }
.canvas { width: 100%; height: 100%; background: #fff; }
.page-edge { stroke: #bfbfbf; stroke-width: 7; }
.outline { stroke: #231815; stroke-width: 4; }
.trace { stroke: #c98052; stroke-dasharray: 3 3; }
.handle { stroke: #2a6fc0; stroke-dasharray: 3 3; }
.tip { fill: #2f86e0; stroke: #2f86e0; }
.node { fill: #2f7fd0; stroke: none; }
.node-mark { stroke: #d07840; stroke-width: 3; }
.cursor { fill: #000; stroke: none; }
.marquee { stroke: #000; stroke-width: 2; stroke-dasharray: 2 2; }

.vscroll, .hscroll { display: flex; background: #fff; color: #555; }
.vscroll { flex-direction: column; padding: 2px 1px 1px 0; }
.vscroll button { height: 15px; background: #f2f2f2; }
.vscroll svg, .hscroll svg { width: 12px; height: 12px; }
.track { flex: 1; min-width: 0; min-height: 0; }
.thumb { background: #cdcdcd; }
.vscroll .track { display: grid; grid-template-rows: 359fr 74fr 567fr; }
.vscroll .thumb { grid-row: 2; }
.bottom { display: flex; grid-column: 2 / 4; }
.hscroll { flex: 1; padding-bottom: 1px; }
.hscroll button { width: 17px; background: #f0f0f0; }
.hscroll .nav { width: 17px; background: #fff; }
.hscroll .track { display: grid; grid-template-columns: 525fr 217fr 258fr; }
.hscroll .thumb { grid-column: 2; }
.pages { display: flex; flex: 1; align-items: center; border-top: 1px solid #8a8a8a; border-right: 1px solid #8a8a8a; color: #444; }
.pages button { width: 16px; }
.pages button svg { width: 10px; height: 10px; }
.pages .count { display: flex; gap: 6px; padding: 0 2px 2px; color: #111; }
.pages .count b { font-weight: 400; }
.pages .pagetab { display: grid; width: 46px; height: 16px; margin-left: 9px; color: #111; }
.pages .pagetab svg { grid-area: 1 / 1; width: 46px; height: 16px; }
.pages .pagetab span { grid-area: 1 / 1; padding-bottom: 2px; }
.grip { flex: none; width: 6px; height: 12px; background: radial-gradient(#b0b0b0 1px, transparent 1px) 0 0 / 3px 4px; }
.pages .grip { margin: 0 2px 0 auto; }

.docpalette { display: flex; flex: none; align-items: center; height: 20px; border-top: 1px solid #d6d6d6; border-bottom: 1px solid #d6d6d6; color: #333; }
.docpalette > .grip { margin-left: 1px; }
.docpalette button { width: 15px; height: 18px; }
.docpalette svg { width: 12px; height: 12px; }
.docpalette svg.play { height: 8px; }
.docpalette .end { margin: 0 3px 0 auto; }
.docpalette > :last-child { margin-right: 9px; }
.swatches { display: flex; border: 1px solid #555; }
.docpalette .swatches { margin-left: 2px; }
.docpalette .swatches button { width: 17px; height: 16px; border-right: 1px solid #555; }
.docpalette .swatches button:last-child { width: 16px; border: 0; }
.docpalette .swatches svg, .swatches svg { width: 16px; height: 16px; color: #333; }

.palette { display: flex; flex: none; flex-direction: column; width: 21px; padding: 4px 0 8px; border-left: 1px solid #d6d6d6; color: #333; }
.palette > .grip { width: 14px; height: 5px; margin-left: 2px; }
.palette > button { width: 18px; height: 15px; }
.palette > button svg:not(.play) { width: 12px; height: 12px; }
.palette > .swatches ~ button { height: 17px; }
.palette .swatches { flex: 1; flex-direction: column; width: 18px; min-height: 0; overflow: hidden; border-bottom: 0; }
.palette .swatches button { width: 16px; height: 17px; border-bottom: 1px solid #555; }
.palette .swatches .current { border: 1px solid #fff; }

.dockers { position: relative; display: flex; flex: none; flex-direction: column; width: 22px; border-left: 3px solid #fff; background: #e9e9ec; }
.dockers > button { width: 19px; }
.dockers .shut { height: 18px; margin-bottom: 1px; background: #dcdcdc; color: #a0a0a0; }
.dockers .shut svg { width: 10px; height: 10px; }
.dockers .tab { gap: 4px; justify-content: flex-start; margin-bottom: 1px; padding: 4px 0 19px; background: #d9d9d9; writing-mode: vertical-rl; text-orientation: sideways; line-height: 19px; }
.dockers .tab .ic { width: 15px; color: #333; }
.dockers .tab.current { padding-bottom: 26px; background: #b1b1b1; }
.dockers .more { height: 54px; }
.meter { position: absolute; right: 0; bottom: 84px; width: 10px; height: 59px; padding: 6px 2px 6px 3px; border: 1px solid #33333f; border-right: 0; border-radius: 4px 0 0 4px; background: #4b4c5c; }
.meter i { display: block; height: 100%; background: repeating-linear-gradient(transparent 0 1px, #4b4c5c 1px 2px), linear-gradient(#22222e 58%, #c8d070 58% 70%, #5fd8b0 80%); }

/* Status bar */
.status { display: flex; flex: none; align-items: center; height: 37px; padding-bottom: 2px; color: #111; }
.status button { width: 30px; }
.status .coords { width: 107px; }
.coords, .ink { white-space: nowrap; font-size: 12px; }
.status .object { margin-left: 19px; }
.proof { margin-left: auto; color: #333; }
.paint { display: flex; align-items: center; }
.paint .ic { color: #333; }
.paint .chip { width: 22px; height: 22px; margin: 0 4px 0 2px; border: 1px solid #888; background: #fff; color: #333; }
.paint .solid { background: #231815; }
.fill { width: 197px; margin-left: 18px; border-right: 1px solid #d6d6d6; }
.pen { width: 226px; padding-left: 12px; }

/* Strip of the desktop beside the window */
.desktop { display: flex; flex: none; flex-direction: column; width: 8px; background: #fff; }
.desktop i { flex: none; }
.sky { height: 51px; background: #6c9fae; }
.head { height: 57px; border-bottom: 1px solid #ccd; }
.band { height: 108px; background: #f3f4f8; border-bottom: 1px solid #ccd; }
.line { height: 28px; border-top: 5px solid #f3f4f8; border-bottom: 1px solid #ccd; }
.desktop .body { flex: 1; }
.sea { height: 146px; background: #6c9fae; }
.taskbar { flex: none; height: 2px; background: #231a1f; }
.taskbar i { display: block; width: 160px; height: 2px; margin-left: 92px; background: #4d4a4c; }
```
FILE: script.js
```js
const NS = 'http://www.w3.org/2000/svg';
const PX_PER_MM = 17000 / 900;

function add(parent, tag, attrs, text) {
  const el = document.createElementNS(NS, tag);
  for (const key in attrs) el.setAttribute(key, attrs[key]);
  if (text !== undefined) el.textContent = text;
  parent.append(el);
}

// Ticks every half millimetre, a label every five millimetres.
function tickLength(half) {
  if (half % 10 === 0) return 5;
  return half % 5 === 0 ? 2 : 1;
}

const h = document.getElementById('hruler');
for (let half = 233; half <= 424; half++) {
  const x = Math.round(73 + (half / 2 - 120) * PX_PER_MM) + 0.5;
  const len = tickLength(half);
  add(h, 'path', { d: `M${x} ${16 - len}v${len}` });
  if (half % 10 === 0) add(h, 'text', { x, y: 10 }, half / 2);
}
add(h, 'path', { class: 'pointer', d: 'M1053.5 1v16' });

const v = document.getElementById('vruler');
for (let half = 467; half >= 370; half--) {
  const y = Math.round(66 + (230 - half / 2) * PX_PER_MM) + 0.5;
  if (y > 860) continue;
  const len = tickLength(half);
  add(v, 'path', { d: `M${16 - len} ${y}h${len}` });
  if (half % 10 === 0) add(v, 'text', { transform: `translate(11 ${y}) rotate(-90)` }, half / 2);
}

function fillSwatches(id, colors, current) {
  const box = document.getElementById(id);
  for (const color of ['none', ...colors]) {
    const b = document.createElement('button');
    b.setAttribute('aria-label', color);
    b.style.background = color === 'none' ? '#fff' : color;
    if (color === 'none') b.innerHTML = '<svg><use href="#i-none"/></svg>';
    if (color === current) b.className = 'current';
    box.append(b);
  }
}

fillSwatches('docSwatches', ['#00a0e9', '#1d2088', '#ffffff', '#f08300', '#e60012']);
fillSwatches('mainSwatches', [
  '#231815', '#3e3a39', '#595757', '#727171', '#898989', '#9fa0a0', '#b5b5b6', '#c9caca',
  '#dcdddd', '#efefef', '#ffffff', '#1d2088', '#00a0e9', '#009944', '#fff100', '#e60012',
  '#e4007f', '#a6428a', '#f08300', '#f2b3b6', '#8b7268', '#d0cbe6', '#a89acc', '#7088c6',
  '#7765b0', '#8e81b0', '#4c6096', '#594f70', '#7588a4', '#008cd6', '#a0d8f8', '#b5cad8',
  '#94a5b2', '#707c88', '#4a4d5c', '#50736f', '#3f8878', '#729794', '#55a896', '#5ba674',
  '#5ec0cf', '#4da6b3', '#b6ccbc', '#d6ebd9', '#a5d4ae', '#99a59f', '#98a67c', '#b5bd6c'
], '#e60012');
```
